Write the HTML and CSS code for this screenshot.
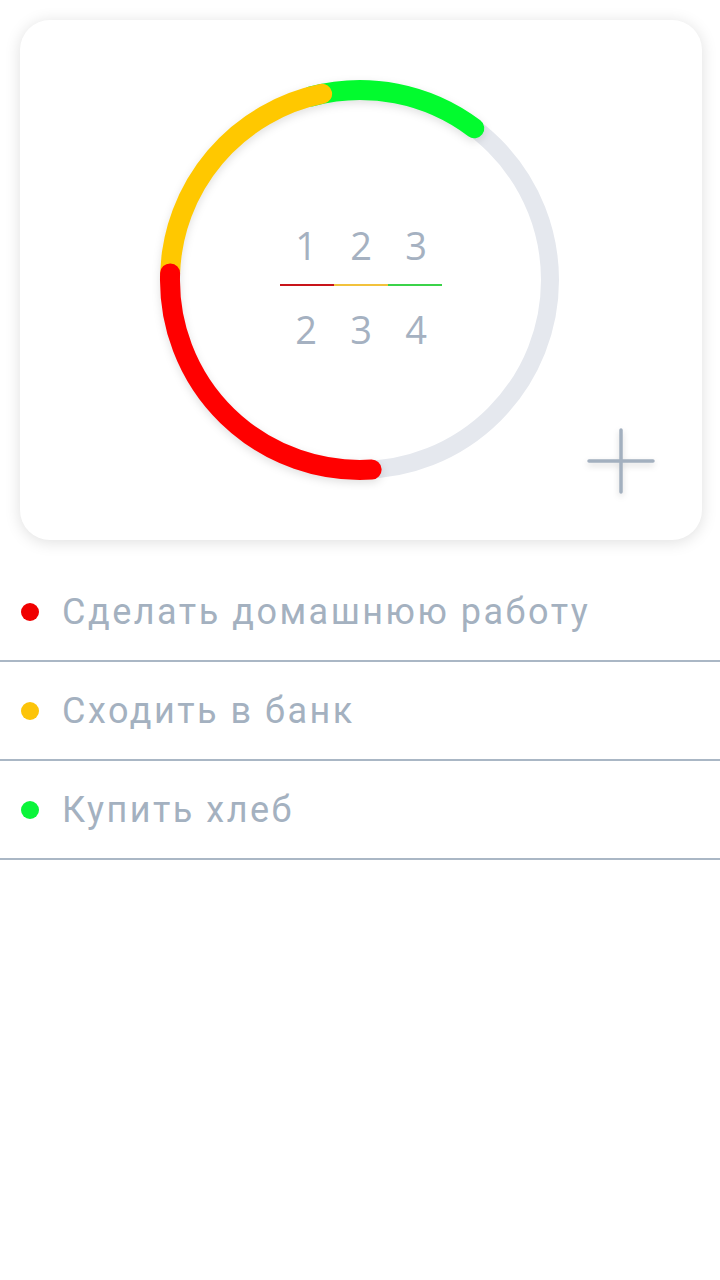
FILE: index.html
```html
<!DOCTYPE html>
<html lang="ru">
<head>
<meta charset="utf-8">
<link rel="stylesheet" href="styles.css">
</head>
<body>
<div class="card">
  <div class="ring">
    <svg class="ring-svg" width="420" height="420" viewBox="0 0 420 420">
      <circle cx="210" cy="210" r="190" fill="none" stroke="#e5e8ee" stroke-width="18"/>
      <g class="arcs" fill="none" stroke-width="20" stroke-linecap="round">
        <path d="M160.8 26.5 A190 190 0 0 1 324.3 58.3" stroke="#02fb2e"/>
        <path d="M20.1 203.4 A190 190 0 0 1 172.1 23.8" stroke="#ffc800"/>
        <path d="M221.6 399.6 A190 190 0 0 1 20.1 203.4" stroke="#ff0000"/>
      </g>
    </svg>
    <div class="fraction">
      <div class="row"><span>1</span><span>2</span><span>3</span></div>
      <div class="bars"><i class="b-red"></i><i class="b-yellow"></i><i class="b-green"></i></div>
      <div class="row"><span>2</span><span>3</span><span>4</span></div>
    </div>
  </div>
  <button class="add" aria-label="Добавить">
    <svg width="70" height="70" viewBox="0 0 70 70">
      <g stroke="#a3b0bf" stroke-width="3.5" stroke-linecap="round">
        <line x1="3" y1="35" x2="67" y2="35"/>
        <line x1="35" y1="4" x2="35" y2="66"/>
      </g>
    </svg>
  </button>
</div>
<ul class="tasks">
  <li class="task"><span class="dot red"></span>Сделать домашнюю работу</li>
  <li class="task"><span class="dot yellow"></span>Сходить в банк</li>
  <li class="task"><span class="dot green"></span>Купить хлеб</li>
</ul>
</body>
</html>
```
FILE: styles.css
```css
* { box-sizing: border-box; }
html, body { margin: 0; padding: 0; background: #ffffff; }
body { width: 720px; height: 1280px; font-family: Roboto, "Noto Sans", sans-serif; }

.card {
  position: relative;
  margin: 20px 18px 0 20px;
  height: 520px;
  background: #ffffff;
  border-radius: 30px;
  box-shadow: 0 2px 16px rgba(0, 0, 0, 0.13);
  display: flex;
  align-items: center;
  justify-content: center;
}

.ring {
  display: grid;
  width: 420px;
  height: 420px;
  margin-left: -2px;
}
.ring > * { grid-area: 1 / 1; }
.ring-svg { display: block; }
.arcs { filter: drop-shadow(0 3px 4px rgba(0,0,0,0.12)); }

.fraction {
  align-self: center;
  justify-self: center;
  display: flex;
  flex-direction: column;
  align-items: center;
  font-family: "Open Sans", sans-serif;
  color: #a5b1c1;
  font-size: 38px;
  margin-top: 13px;
  margin-left: 2px;
}
.row {
  display: grid;
  grid-template-columns: repeat(3, 55px);
  text-align: center;
  line-height: 44px;
}
.bars {
  display: grid;
  grid-template-columns: repeat(3, 54px);
  height: 2px;
  margin: 17px 0 21px;
}
.bars i { display: block; height: 2px; }
.b-red { background: #c8141a; }
.b-yellow { background: #f2c23c; }
.b-green { background: #3bd34a; }

.add {
  position: absolute;
  right: 46px;
  bottom: 44px;
  width: 70px;
  height: 70px;
  padding: 0;
  border: 0;
  background: none;
  filter: drop-shadow(0 3px 3px rgba(0,0,0,0.15));
}
.add svg { display: block; }

.tasks {
  list-style: none;
  margin: 23px 0 0;
  padding: 0;
}
.task {
  display: flex;
  align-items: center;
  height: 99px;
  border-bottom: 2px solid #aab7c5;
  padding-left: 21px;
  padding-bottom: 0;
  font-size: 36px;
  color: #a4b1c0;
  letter-spacing: 2.5px;
}
.dot {
  width: 18px;
  height: 18px;
  border-radius: 50%;
  margin-right: 23px;
  flex: none;
}
.dot.red { background: #f00000; }
.dot.yellow { background: #fcc40a; }
.dot.green { background: #0bf53a; }
```
